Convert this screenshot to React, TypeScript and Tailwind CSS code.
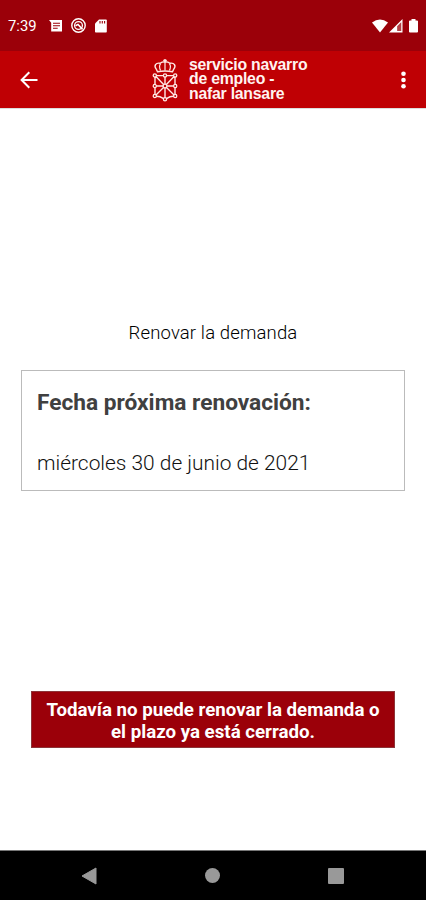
import React from 'react';

const CrestLogo: React.FC = () => (
  <svg width="28" height="44" viewBox="0 0 28 44" fill="none" stroke="#ffe9e6" strokeWidth="1.4">
    {/* Crown */}
    <path d="M6.5 13.8 L5.4 11.4 C2.4 7.8 4.8 4.6 9 5.2 C11.4 3.2 16.6 3.2 19 5.2 C23.2 4.6 25.6 7.8 22.6 11.4 L21.5 13.8 C17 12.9 11 12.9 6.5 13.8Z" />
    <path d="M9.6 5.6 C7.6 8 8.6 10.4 9.6 12.6 M18.4 5.6 C20.4 8 19.4 10.4 18.4 12.6 M14 4 V12.4" strokeWidth="1.2" />
    <path d="M14 1 V4.4 M12.2 2.4 H15.8" />
    {/* Shield chains */}
    <path d="M4 17.6 H24 M4 17.6 V38 M24 17.6 V38 M4 38 Q9 38 14 41.3 Q19 38 24 38 M14 17.6 V41 M4 28 H24 M4 17.6 L14 28 L24 17.6 M4 38 L14 28 L24 38" />
    <g fill="#bf0004" strokeWidth="1.3">
      <circle cx="3.8" cy="17.4" r="1.6" />
      <circle cx="14" cy="17.4" r="1.6" />
      <circle cx="24.2" cy="17.4" r="1.6" />
      <circle cx="3.8" cy="28" r="1.6" />
      <circle cx="24.2" cy="28" r="1.6" />
      <circle cx="3.8" cy="38" r="1.6" />
      <circle cx="24.2" cy="38" r="1.6" />
      <circle cx="14" cy="41.3" r="1.6" />
      <circle cx="14" cy="28" r="1.9" />
    </g>
  </svg>
);

const StatusBar: React.FC = () => (
  <div className="flex h-[51px] items-center bg-[#9b0009] pl-2 pr-2 text-white">
    <span className="w-[41px] pt-[2px] text-[14.8px] leading-[17px]">7:39</span>
    <svg className="mr-2" width="14" height="14" viewBox="0 0 14 14">
      <path d="M0 1 H13 V12.5 H2.2 V3.8Z" fill="#fff" />
      <path d="M4 4.2 H11 M4 6.7 H11 M4 9.2 H8.7" stroke="#9b0009" strokeWidth="1.1" />
    </svg>
    <svg className="mr-[9px]" width="15" height="15" viewBox="0 0 15 15" fill="none" stroke="#fff">
      <circle cx="7.5" cy="7.5" r="6.7" strokeWidth="1.4" />
      <circle cx="7.5" cy="7.5" r="3.9" strokeWidth="1.3" />
      <path d="M4.6 7.8 L7 6.4 L11.6 11.4" strokeWidth="1.6" />
    </svg>
    <svg width="12" height="14" viewBox="0 0 12 14">
      <path d="M4 .5 H11 Q11.8 .5 11.8 1.3 V12.7 Q11.8 13.5 11 13.5 H.8 Q0 13.5 0 12.7 V4.5Z" fill="#fff" />
      <path d="M5 2 V4.5 M7.3 2 V4.5 M9.6 2 V4.5" stroke="#9b0009" strokeWidth="1.1" />
    </svg>
    <div className="ml-auto flex items-center">
      <svg className="mr-[1px]" width="16" height="14" viewBox="0 0 16 14">
        <path d="M0 3.5 Q8 -2.5 16 3.5 L8 13.5Z" fill="#fff" />
      </svg>
      <svg className="mr-[6px]" width="14" height="14" viewBox="0 0 14 14">
        <path d="M0 13.5 L13.5 0 V13.5Z M8.2 7.2 V12 H12.2 V3.2Z" fill="#fff" fillRule="evenodd" />
        <path d="M8.2 7.2 V12 H12.2 V3.2Z" fill="#fff" fillOpacity="0.25" />
      </svg>
      <svg width="9" height="14" viewBox="0 0 9 14">
        <path d="M2.5 0 H6.5 V1.4 H8 Q9 1.4 9 2.2 V12.8 Q9 13.6 8 13.6 H1 Q0 13.6 0 12.8 V2.2 Q0 1.4 1 1.4 H2.5Z" fill="#fff" />
      </svg>
    </div>
  </div>
);

const Toolbar: React.FC = () => (
  <header className="flex h-[57px] items-center bg-[#bf0004] pl-5 pr-5">
    <button className="w-[131px]" aria-label="Volver">
      <svg width="18" height="18" viewBox="0 0 18 18" fill="none" stroke="#fff" strokeWidth="2">
        <path d="M17.5 9 H2 M9.3 1.2 L1.6 9 L9.3 16.8" />
      </svg>
    </button>
    <CrestLogo />
    <h1 className="ml-[10px] whitespace-nowrap font-['Liberation_Sans',Arial,sans-serif] text-[15.8px] font-bold leading-[14.5px] tracking-[-0.23px] text-[#fff3f0]">
      servicio navarro<br />
      de empleo -<br />
      nafar lansare
    </h1>
    <button className="ml-auto" aria-label="Más opciones">
      <svg width="5" height="18" viewBox="0 0 5 18" fill="#fff">
        <circle cx="2.5" cy="2.7" r="2.3" />
        <circle cx="2.5" cy="9" r="2.3" />
        <circle cx="2.5" cy="15.3" r="2.3" />
      </svg>
    </button>
  </header>
);

const NavigationBar: React.FC = () => (
  <nav className="flex h-[50px] items-center justify-between border-t border-[#777] bg-black pl-[81px] pr-[82px]">
    <svg width="16" height="18" viewBox="0 0 16 18">
      <path d="M15 1 V17 L1 9Z" fill="#999" stroke="#999" strokeLinejoin="round" />
    </svg>
    <div className="size-[15px] rounded-full bg-[#999]" />
    <div className="size-4 rounded-[1px] bg-[#999]" />
  </nav>
);

export default function App() {
  return (
    <div className="flex h-[900px] w-[426px] flex-col bg-white font-[Roboto,sans-serif]">
      <StatusBar />
      <Toolbar />
      <main className="flex flex-1 flex-col border-t border-[#ddd]">
        <h2 className="mt-[212px] text-center text-[18.5px] font-light leading-6 tracking-[0.14px] text-black">
          Renovar la demanda
        </h2>
        <section className="mx-[21px] mt-[25px] h-[121px] border border-[#bbb] px-[15px] pt-[18px] text-[#404040]">
          <p className="text-[22.7px] font-bold leading-7">Fecha próxima renovación:</p>
          <p className="mt-8 text-[20.9px] font-light leading-7 text-[#111]">miércoles 30 de junio de 2021</p>
        </section>
        <div className="mx-[31px] mt-[200px] h-[57px] whitespace-nowrap border border-[#8c3438] bg-[#9b0009] pt-[7px] text-center text-[18.7px] font-bold leading-[22px] text-white">
          Todavía no puede renovar la demanda o<br />
          el plazo ya está cerrado.
        </div>
      </main>
      <NavigationBar />
    </div>
  );
}
